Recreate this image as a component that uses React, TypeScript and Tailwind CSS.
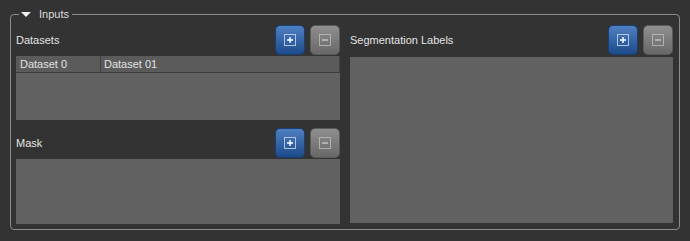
import React from "react";

function PlusIcon() {
  return (
    <svg width="12" height="12" viewBox="0 0 12 12">
      <rect x="0.5" y="0.5" width="11" height="11" fill="none" stroke="rgba(220,230,245,0.75)" strokeWidth="1" />
      <path d="M6 3 V9 M3 6 H9" stroke="#ffffff" strokeWidth="1.4" />
    </svg>
  );
}

function MinusIcon() {
  return (
    <svg width="12" height="12" viewBox="0 0 12 12">
      <rect x="0.5" y="0.5" width="11" height="11" fill="none" stroke="rgba(200,200,200,0.7)" strokeWidth="1" />
      <path d="M3 6 H9" stroke="rgba(215,215,215,0.85)" strokeWidth="1.4" />
    </svg>
  );
}

function Buttons() {
  return (
    <div className="flex gap-[5px]">
      <button className="w-[30px] h-[30px] rounded-[5px] flex items-center justify-center bg-gradient-to-b from-[#4f80c2] to-[#1c4b8c] border border-[#1a3f75]">
        <PlusIcon />
      </button>
      <button className="w-[30px] h-[30px] rounded-[5px] flex items-center justify-center bg-gradient-to-b from-[#8f8f8f] to-[#686868] border border-[#5a5a5a]">
        <MinusIcon />
      </button>
    </div>
  );
}

function Header({ label }: { label: string }) {
  return (
    <div className="h-[30px] flex items-center justify-between">
      <span className="text-[11px] text-[#e4e4e4] leading-none">{label}</span>
      <Buttons />
    </div>
  );
}

export default function App() {
  return (
    <div
      className="w-[690px] h-[241px] bg-[#333333] pt-[14px] pl-[10px]"
      style={{ fontFamily: '"Liberation Sans", Arial, sans-serif' }}
    >
      <div className="relative w-[670px] h-[216px] border border-[#8c8c8c] rounded-[4px] pt-[10px] pl-[5px] pr-[6px] flex gap-[10px]">
        <div className="absolute -top-[8px] left-[8px] h-[14px] bg-[#333333] flex items-center pl-[2px] pr-[3px] gap-[8px]">
          <svg width="10" height="5" viewBox="0 0 10 5">
            <path d="M0 0 H10 L5 5 Z" fill="#f0f0f0" />
          </svg>
          <span className="text-[11px] text-[#dcdcdc] leading-none">Inputs</span>
        </div>

        <div className="w-[324px] flex flex-col">
          <Header label="Datasets" />
          <div className="mt-[1px] h-[64px] bg-[#616161] flex flex-col">
            <div className="h-[17px] flex bg-[#5b5b5b] border-b border-[#3e3e3e] text-[11px] text-[#e2e2e2] leading-none">
              <div className="w-[85px] pl-[4px] flex items-center border-r border-[#3e3e3e]">Dataset 0</div>
              <div className="flex-1 pl-[3px] flex items-center border-r border-[#444444]">Dataset 01</div>
            </div>
          </div>
          <div className="mt-[8px]">
            <Header label="Mask" />
          </div>
          <div className="mt-[1px] h-[65px] bg-[#616161]" />
        </div>

        <div className="w-[323px] flex flex-col">
          <Header label="Segmentation Labels" />
          <div className="mt-[2px] h-[166px] bg-[#616161]" />
        </div>
      </div>
    </div>
  );
}
